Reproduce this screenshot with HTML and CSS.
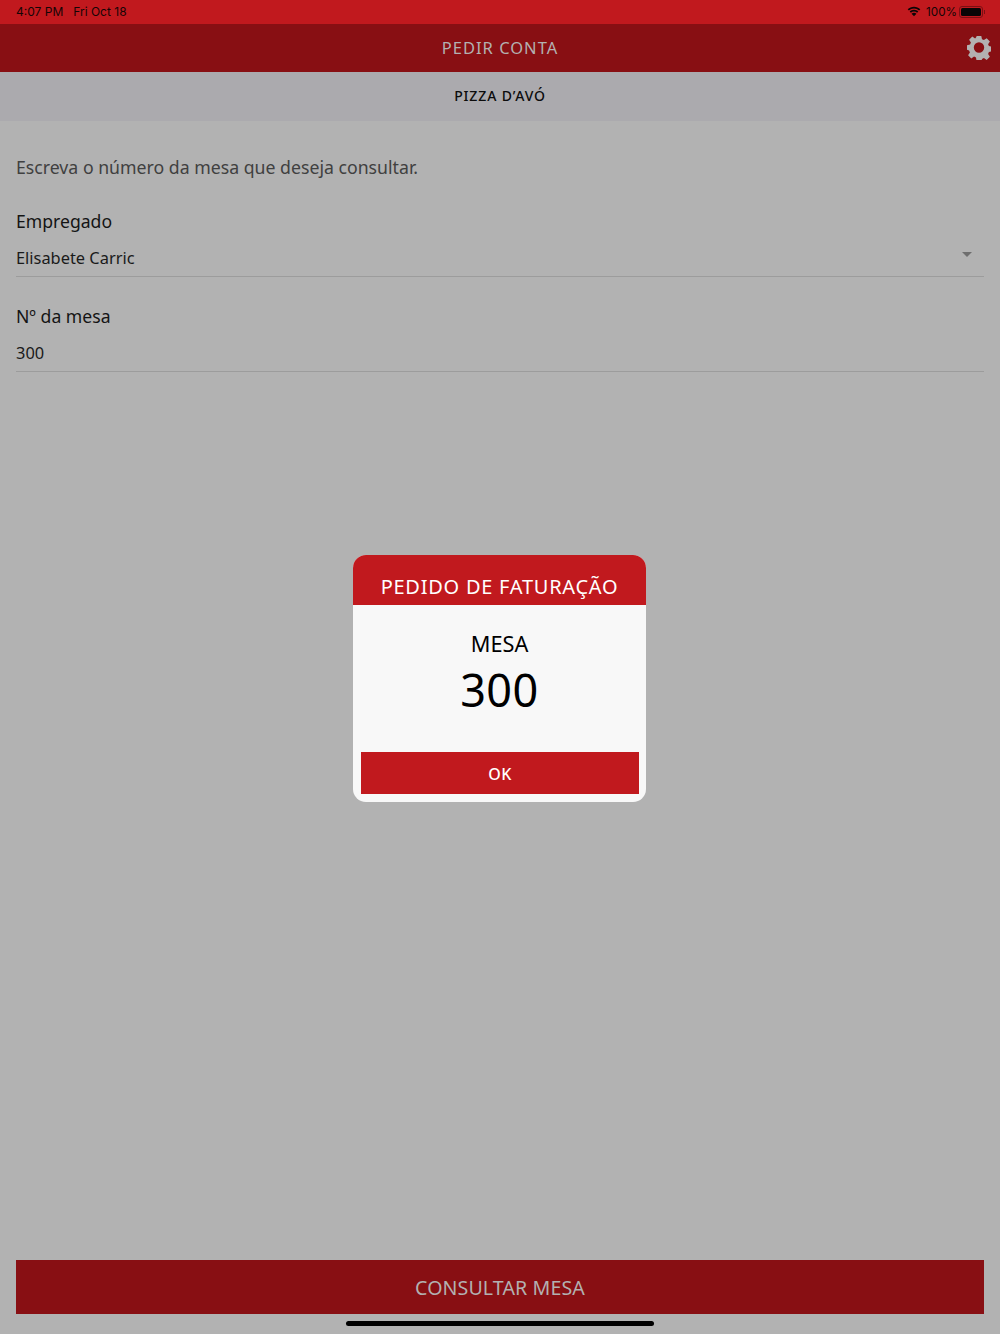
FILE: index.html
```html
<!DOCTYPE html>
<html lang="pt">
<head>
<meta charset="utf-8">
<title>Pedir conta</title>
<link rel="stylesheet" href="styles.css">
</head>
<body>
<div class="page">
  <div class="status">
    <div class="status-left"><span>4:07 PM</span><span>Fri Oct 18</span></div>
    <div class="status-right">
      <svg class="wifi" viewBox="0 0 16 12" width="14" height="11"><path fill="#0a0506" d="M8 2.600c2.300 0 4.300.9 5.800 2.300L15.200 3.400C13.300 1.600 10.800.5 8 .5S2.700 1.600.8 3.400l1.400 1.500C3.700 3.500 5.700 2.600 8 2.600zM8 6c1.400 0 2.600.5 3.500 1.400l1.400-1.500C11.600 4.700 9.900 3.900 8 3.900s-3.600.8-4.900 2l1.400 1.500C5.400 6.500 6.600 6 8 6zm0 5.500L5.200 8.500C6 7.800 7 7.300 8 7.300s2 .5 2.800 1.200L8 11.500z"/></svg>
      <span class="battery-text">100%</span>
      <span class="battery"><span class="battery-fill"></span></span><span class="battery-cap"></span>
    </div>
  </div>
  <header class="appbar">
    <h1 class="appbar-title">PEDIR CONTA</h1>
    <svg class="gear" viewBox="0 0 24 24" width="24" height="24"><path fill="#b3b1b1" fill-rule="evenodd" d="M9.700 0h4.600l.7 3.200 1.900.8 2.800-1.800 3.200 3.200-1.800 2.800.8 1.900 3.100.6v4.600l-3.100.7-.8 1.900 1.800 2.800-3.200 3.200-2.800-1.800-1.900.8-.7 3.100H9.700L9 21.400l-1.900-.8-2.800 1.800-3.200-3.200 1.800-2.800-.8-1.900L-.1 13.800V9.200l3.200-.7.800-1.900-1.800-2.800 3.200-3.200 2.800 1.800L9 1.600 9.700 0zM12 6.300a5.200 5.200 0 1 0 0 10.400 5.200 5.200 0 0 0 0-10.400z"/></svg>
  </header>
  <div class="subbar">PIZZA D’AVÓ</div>
  <main class="content">
    <p class="intro">Escreva o número da mesa que deseja consultar.</p>
    <div class="field">
      <label class="field-label">Empregado</label>
      <div class="field-value">Elisabete Carric<span class="caret"></span></div>
    </div>
    <div class="field">
      <label class="field-label">Nº da mesa</label>
      <div class="field-value">300</div>
    </div>
    <button class="submit">CONSULTAR MESA</button>
  </main>
  <div class="home-indicator"></div>
  <div class="modal">
    <div class="modal-head">PEDIDO DE FATURAÇÃO</div>
    <div class="modal-body">
      <div class="modal-label">MESA</div>
      <div class="modal-number">300</div>
    </div>
    <button class="modal-ok">OK</button>
  </div>
</div>
</body>
</html>
```
FILE: styles.css
```css
* { box-sizing: border-box; }
html, body { margin: 0; padding: 0; }
body { font-family: "Noto Sans", sans-serif; background: #b2b2b2; }
.page {
  position: relative;
  width: 1000px;
  height: 1334px;
  display: flex;
  flex-direction: column;
  overflow: hidden;
  background: #b2b2b2;
  color: #111;
}
.status {
  height: 24px;
  flex: none;
  background: #c1191e;
  display: flex;
  justify-content: space-between;
  align-items: center;
  padding: 0 15px 1px 16px;
  font-family: Inter, "Liberation Sans", sans-serif;
  font-size: 12px;
  color: #140506;
}
.status-left { display: flex; gap: 10px; }
.status-right { display: flex; align-items: center; gap: 3px; }
.battery-text { font-size: 11.7px; }
.wifi { margin-right: 2px; }
.battery {
  width: 24px;
  height: 12px;
  border: 1px solid #7c0f13;
  border-radius: 3px;
  padding: 1px;
  margin-left: -1px;
  display: flex;
}
.battery-fill { flex: 1; background: #0a0506; border-radius: 1.5px; }
.battery-cap { width: 1px; height: 4px; background: #7c0f13; margin-left: -2px; }
.appbar {
  height: 48px;
  flex: none;
  background: #880f13;
  display: flex;
  align-items: center;
  justify-content: center;
  position: relative;
}
.appbar-title {
  margin: 0;
  padding-bottom: 2px;
  font-size: 16.5px;
  font-weight: 400;
  letter-spacing: 1px;
  color: #b3b1b1;
}
.gear { position: absolute; right: 9px; top: 12px; }
.subbar {
  height: 49px;
  flex: none;
  background: #abaaae;
  display: flex;
  align-items: center;
  justify-content: center;
  padding-bottom: 2px;
  font-size: 14px;
  font-weight: 500;
  letter-spacing: 0.85px;
  color: #0c0c0c;
}
.content {
  flex: 1;
  display: flex;
  flex-direction: column;
  padding: 0 16px 20px;
}
.intro {
  margin: 33px 0 0;
  font-size: 17.7px;
  line-height: 26px;
  color: #404040;
}
.field { margin-top: 28px; }
.field + .field { margin-top: 26px; }
.field-label {
  display: block;
  font-size: 17.6px;
  line-height: 26px;
  color: #141414;
}
.field-value {
  position: relative;
  height: 43px;
  padding-top: 11px;
  font-size: 16.4px;
  line-height: 26px;
  color: #1a1a1a;
  border-bottom: 1px solid #9c9c9c;
}
.caret {
  position: absolute;
  right: 12px;
  top: 18px;
  width: 0;
  height: 0;
  border-left: 5px solid transparent;
  border-right: 5px solid transparent;
  border-top: 5px solid #6e6e6e;
}
.submit {
  margin-top: auto;
  height: 54px;
  border: 0;
  padding: 1px 0 0;
  background: #880f13;
  color: #b3b1b1;
  font-family: inherit;
  font-size: 19.6px;
  letter-spacing: 0.1px;
}
.home-indicator {
  position: absolute;
  left: 346px;
  top: 1321px;
  width: 308px;
  height: 5px;
  border-radius: 3px;
  background: #000;
}
.modal {
  position: absolute;
  left: 353px;
  top: 555px;
  width: 293px;
  height: 247px;
  background: #f8f8f8;
  border-radius: 13px;
  overflow: hidden;
  display: flex;
  flex-direction: column;
}
.modal-head {
  height: 50px;
  flex: none;
  background: #c1191e;
  color: #fff;
  text-align: center;
  font-size: 20px;
  line-height: 28px;
  padding-top: 18px;
  letter-spacing: 0.75px;
}
.modal-body { flex: 1; text-align: center; color: #000; }
.modal-label { font-size: 21.7px; line-height: 30px; margin-top: 24px; }
.modal-number { font-size: 45px; line-height: 60px; margin-top: 1px; letter-spacing: 0.5px; }
.modal-ok {
  flex: none;
  height: 42px;
  margin: 0 7px 8px 8px;
  border: 0;
  padding: 2px 0 0;
  background: #c1191e;
  color: #fff;
  font-family: inherit;
  font-size: 16px;
  font-weight: 500;
  letter-spacing: 0.5px;
}
```
